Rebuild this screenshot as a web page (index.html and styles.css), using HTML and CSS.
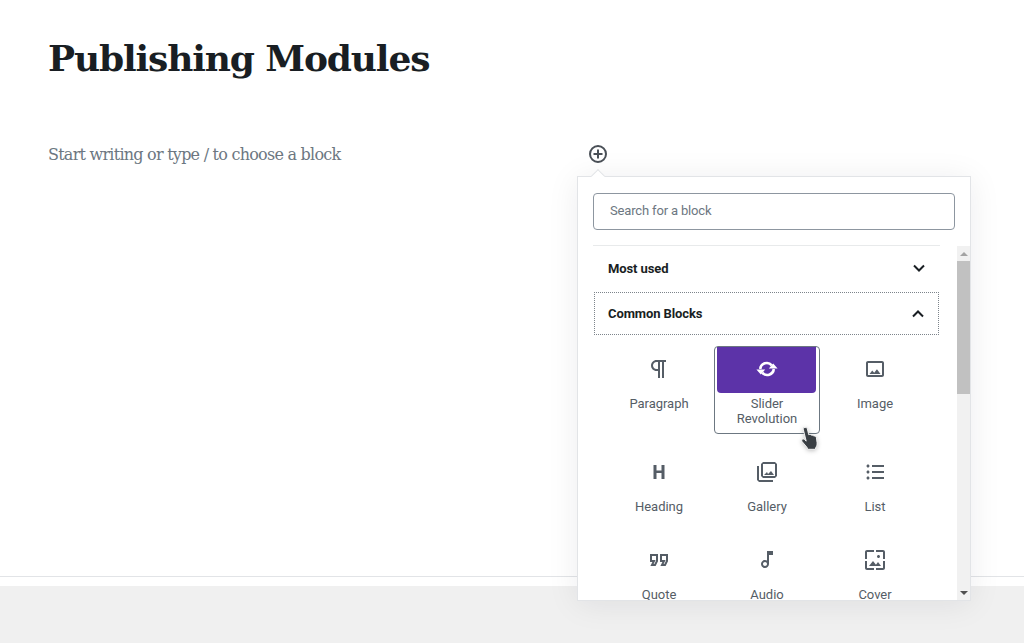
FILE: index.html
```html
<!DOCTYPE html>
<html lang="en">
<head>
<meta charset="utf-8">
<title>Publishing Modules</title>
<link rel="stylesheet" href="styles.css">
</head>
<body>
<main class="editor">
  <h1 class="title">Publishing Modules</h1>
  <div class="write-row">
    <p class="placeholder">Start writing or type / to choose a block</p>
    <button class="add-btn" aria-label="Add block">
      <svg width="20" height="20" viewBox="0 0 20 20"><circle cx="10" cy="10" r="8" fill="none" stroke="#4a5057" stroke-width="2"/><path d="M10 5.500v9M5.500 10h9" stroke="#4a5057" stroke-width="2" fill="none"/></svg>
    </button>
  </div>
</main>
<footer class="footer"></footer>

<section class="popover">
  <span class="popover-arrow"></span>
  <div class="search-wrap"><div class="search">Search for a block</div></div>
  <div class="popover-body">
    <div class="list">
      <div class="panel-head panel-most">
        <span>Most used</span>
        <svg width="24" height="24" viewBox="0 0 24 24"><path d="M7 9.500l5 5 5-5" fill="none" stroke="#191e23" stroke-width="2"/></svg>
      </div>
      <div class="panel-head panel-common">
        <span>Common Blocks</span>
        <svg width="24" height="24" viewBox="0 0 24 24"><path d="M7 14.500l5-5 5 5" fill="none" stroke="#191e23" stroke-width="2"/></svg>
      </div>
      <div class="grid">
        <div class="item">
          <div class="item-icon"><svg width="24" height="24" viewBox="0 0 24 24"><path d="M11 5v7H9.500C7.600 12 6 10.400 6 8.500S7.600 5 9.500 5H11m8-2H9.500C6.500 3 4 5.500 4 8.500S6.500 14 9.500 14H11v7h2V5h2v16h2V5h2V3z"/></svg></div>
          <div class="item-label">Paragraph</div>
        </div>
        <div class="item item-active">
          <div class="item-icon"><svg width="24" height="24" viewBox="0 0 24 24"><path d="M5.200 12a6.600 6.600 0 0 1 11.600-3.600" fill="none" stroke="#fff" stroke-width="2.600"/><path d="M18.800 12a6.600 6.600 0 0 1-11.600 3.600" fill="none" stroke="#fff" stroke-width="2.600"/><path d="M13.800 11.600h8.800l-4.400-5.200zM1.400 12.400h8.800l-4.400 5.200z" fill="#fff"/></svg></div>
          <div class="item-label">Slider<br>Revolution</div>
        </div>
        <div class="item">
          <div class="item-icon"><svg width="24" height="24" viewBox="0 0 24 24"><path d="M19 4H5C3.900 4 3 4.900 3 6v12c0 1.100.9 2 2 2h14c1.100 0 2-.9 2-2V6c0-1.100-.9-2-2-2zm0 14H5V6h14v12z"/><path d="M13.960 12.290l-2.750 3.540-1.960-2.360L6.500 17h11l-3.540-4.710z"/></svg></div>
          <div class="item-label">Image</div>
        </div>
        <div class="item">
          <div class="item-icon"><svg width="24" height="24" viewBox="0 0 24 24"><path d="M17.500 19h-3v-6h-5v6h-3V5h3v5.500h5V5h3z"/></svg></div>
          <div class="item-label">Heading</div>
        </div>
        <div class="item">
          <div class="item-icon"><svg width="24" height="24" viewBox="0 0 24 24"><path d="M20 4v12H8V4h12m0-2H8L6 4v12l2 2h12l2-2V4l-2-2z"/><path d="M12 12l1 2 3-3 3 4H9z"/><path d="M2 6v14l2 2h14v-2H4V6H2z"/></svg></div>
          <div class="item-label">Gallery</div>
        </div>
        <div class="item">
          <div class="item-icon"><svg width="24" height="24" viewBox="0 0 24 24"><path d="M9 19h12v-2H9v2zm0-6h12v-2H9v2zm0-8v2h12V5H9zm-4-.5c-.828 0-1.500.672-1.500 1.500S4.172 7.500 5 7.500 6.500 6.828 6.500 6 5.828 4.500 5 4.500zm0 6c-.828 0-1.500.672-1.500 1.500s.672 1.500 1.500 1.500 1.500-.672 1.500-1.500-.672-1.500-1.500-1.500zm0 6c-.828 0-1.500.672-1.500 1.500s.672 1.500 1.500 1.500 1.500-.672 1.500-1.500-.672-1.500-1.500-1.500z"/></svg></div>
          <div class="item-label">List</div>
        </div>
        <div class="item">
          <div class="item-icon"><svg width="24" height="24" viewBox="0 0 24 24"><path d="M18.620 18h-5.240l2-4H13V6h8v7.240L18.620 18zm-2-2h.76L19 12.760V8h-4v4h3.620l-2 4zm-8 2H3.380l2-4H3V6h8v7.240L8.620 18zm-2-2h.76L9 12.760V8H5v4h3.620l-2 4z"/></svg></div>
          <div class="item-label">Quote</div>
        </div>
        <div class="item">
          <div class="item-icon"><svg width="24" height="24" viewBox="0 0 24 24"><path d="M12 3v9.560c-.59-.34-1.270-.56-2-.56-2.210 0-4 1.790-4 4s1.790 4 4 4 4-1.790 4-4V7h4V3h-6zm-2 15c-1.100 0-2-.9-2-2s.9-2 2-2 2 .9 2 2-.9 2-2 2z"/></svg></div>
          <div class="item-label">Audio</div>
        </div>
        <div class="item">
          <div class="item-icon"><svg width="24" height="24" viewBox="0 0 24 24"><path d="M4 4h7V2H4c-1.100 0-2 .9-2 2v7h2V4zm6 9l-4 5h12l-3-4-2.030 2.710L10 13zm7-4.500c0-.83-.67-1.500-1.500-1.500S14 7.670 14 8.500s.67 1.500 1.500 1.500S17 9.330 17 8.500zM20 2h-7v2h7v7h2V4c0-1.100-.9-2-2-2zm0 18h-7v2h7c1.100 0 2-.9 2-2v-7h-2v7zM4 13H2v7c0 1.100.9 2 2 2h7v-2H4v-7z"/></svg></div>
          <div class="item-label">Cover</div>
        </div>
      </div>
    </div>
    <div class="scrollbar">
      <div class="scroll-btn"><span class="tri tri-up"></span></div>
      <div class="track"><div class="thumb"></div></div>
      <div class="scroll-btn"><span class="tri tri-down"></span></div>
    </div>
  </div>
</section>

<svg class="cursor" width="22" height="26" viewBox="0 0 20 24">
  <path d="M5.500 1.500c.9-.4 1.800.2 2 1l1.300 5.500 .5-.2c.8-.2 1.500.1 1.800.7l.5-.1c.8-.1 1.500.2 1.800.9l.5-.1c1-.1 1.800.6 2 1.600l.6 4.600c.2 1.800-.3 3.200-1.200 4.500l-.3 1.600H7.800l-.5-1.700-4.500-5.300c-.6-.8-.5-1.700.1-2.200.6-.5 1.500-.4 2.100.2l1.500 1.500-2.600-10.500c-.2-.9.100-1.700.6-2z" fill="#3a3f44" stroke="#fff" stroke-width=".8"/>
</svg>
</body>
</html>
```
FILE: styles.css
```css
* { box-sizing: border-box; }
html, body { margin: 0; padding: 0; }
body {
  position: relative;
  width: 1024px;
  height: 643px;
  overflow: hidden;
  background: #fff;
  font-family: Roboto, "Liberation Sans", sans-serif;
  color: #191e23;
}
.editor {
  height: 576px;
  padding: 35px 0 0 48px;
}
.title {
  margin: 0;
  font-family: "DejaVu Serif", "Liberation Serif", serif;
  font-weight: 700;
  font-size: 36px;
  line-height: 46px;
  letter-spacing: -1.14px;
  color: #191e23;
}
.write-row {
  display: flex;
  justify-content: space-between;
  align-items: center;
  width: 560px;
  height: 24px;
  margin-top: 61px;
}
.placeholder {
  margin: 1px 0 0;
  font-family: "DejaVu Serif", "Liberation Serif", serif;
  font-size: 16px;
  line-height: 24px;
  letter-spacing: -.76px;
  color: #6c7781;
}
.add-btn {
  display: flex;
  width: 20px;
  height: 20px;
  padding: 0;
  border: 0;
  background: none;
}
.footer {
  height: 67px;
  border-top: 1px solid #e2e4e7;
  background: linear-gradient(#fff 0, #fff 9px, #f0f0f0 9px);
}
.popover {
  position: absolute;
  left: 577px;
  top: 176px;
  width: 394px;
  height: 425px;
  background: #fff;
  border: 1px solid #e2e4e7;
  box-shadow: 0 3px 30px rgba(25, 30, 35, .08);
  display: flex;
  flex-direction: column;
}
.popover-arrow {
  position: absolute;
  left: 15px;
  top: -6px;
  width: 10px;
  height: 10px;
  background: #fff;
  border-top: 1px solid #e2e4e7;
  border-left: 1px solid #e2e4e7;
  transform: rotate(45deg);
}
.search-wrap {
  padding: 16px 15px 0;
  height: 68px;
  flex: none;
}
.search {
  height: 37px;
  border: 1px solid #8d96a0;
  border-radius: 4px;
  padding: 0 16px;
  font-size: 13px;
  line-height: 34px;
  letter-spacing: -.16px;
  color: #6c7781;
}
.popover-body {
  flex: 1;
  display: flex;
  min-height: 0;
}
.list {
  flex: none;
  width: 379px;
  padding-left: 15px;
  overflow: hidden;
}
.panel-head {
  display: flex;
  align-items: center;
  justify-content: space-between;
  width: 347px;
  font-size: 13px;
  font-weight: 700;
  letter-spacing: -.1px;
  color: #191e23;
}
.panel-most {
  height: 47px;
  padding: 0 9px 2px 15px;
  border-top: 1px solid #e8eaeb;
}
.panel-common {
  height: 43px;
  margin-left: 1px;
  width: 345px;
  padding: 0 8px 0 13px;
  border: 1px dotted #7d848b;
}
.grid {
  display: grid;
  grid-template-columns: repeat(3, 108px);
  row-gap: 15px;
  align-items: start;
  margin: 11px 0 0 13px;
}
.item {
  width: 106px;
  padding: 0 3px 7px;
  border: 1px solid transparent;
  border-top: 0;
  border-radius: 4px;
  text-align: center;
  color: #555d66;
}
.item-icon {
  height: 47px;
  padding-bottom: 2px;
  display: flex;
  align-items: center;
  justify-content: center;
  border-radius: 0 0 4px 4px;
}
.item-icon svg { fill: #555d66; }
.item-label {
  margin-top: 3px;
  font-size: 13px;
  line-height: 15px;
  letter-spacing: -.03px;
}
.item-active {
  border: 1px solid #6c7781;
  padding: 0 2px 7px;
  height: 88px;
}
.item-active .item-icon {
  background: #5c33a8;
  height: 46px;
  margin-right: 1px;
}
.scrollbar {
  flex: none;
  width: 13px;
  margin-top: 1px;
  display: flex;
  flex-direction: column;
  background: #f1f1f1;
}
.scroll-btn {
  height: 15px;
  flex: none;
  display: flex;
  align-items: center;
  justify-content: center;
}
.track { flex: 1; }
.thumb {
  height: 133px;
  background: #c1c1c1;
}
.tri {
  width: 0;
  height: 0;
  border-left: 4px solid transparent;
  border-right: 4px solid transparent;
}
.tri-up { border-bottom: 4px solid #a3a3a3; }
.tri-down { border-top: 4px solid #505050; }
.cursor {
  position: absolute;
  left: 799px;
  top: 426px;
  filter: drop-shadow(0 1px 2px rgba(0, 0, 0, .25));
}
```
